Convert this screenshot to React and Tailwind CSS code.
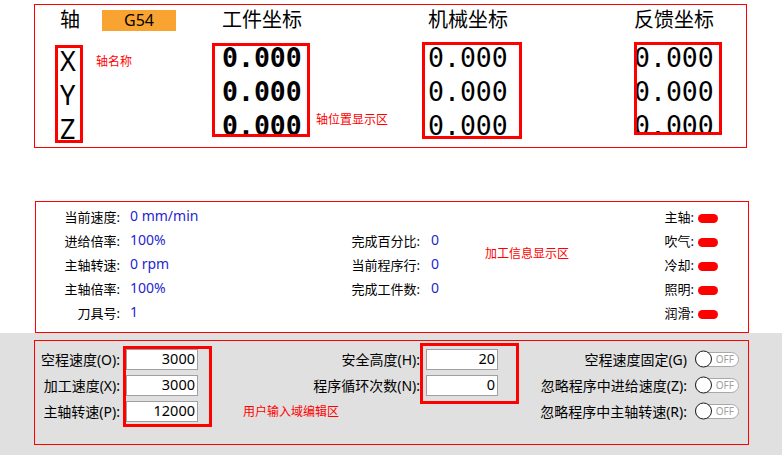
const axes = ['X', 'Y', 'Z'];

const leftInfo = [
  ['当前速度:', '0 mm/min'],
  ['进给倍率:', '100%'],
  ['主轴转速:', '0 rpm'],
  ['主轴倍率:', '100%'],
  ['刀具号:', '1'],
];

const midInfo = [
  ['完成百分比:', '0'],
  ['当前程序行:', '0'],
  ['完成工件数:', '0'],
];

const lamps = ['主轴:', '吹气:', '冷却:', '照明:', '润滑:'];

const leftInputs = [
  ['空程速度(O):', '3000'],
  ['加工速度(X):', '3000'],
  ['主轴转速(P):', '12000'],
];

const midInputs = [
  ['安全高度(H):', '20'],
  ['程序循环次数(N):', '0'],
];

const switches = ['空程速度固定(G)', '忽略程序中进给速度(Z):', '忽略程序中主轴转速(R):'];

function Toggle() {
  return (
    <div className="relative w-[44px] h-[15px] rounded-full border border-[#a8a8a8] bg-white">
      <div className="absolute -left-[1px] top-1/2 -translate-y-1/2 w-[17px] h-[17px] rounded-full border border-[#1a1a1a] bg-white" />
      <span className="absolute right-[4px] top-1/2 -translate-y-1/2 text-[10px] leading-none text-[#a0a0a0]">OFF</span>
    </div>
  );
}

function CoordColumn({ bold, last }) {
  return (
    <div className={`${last ? 'flex-1' : 'w-[206px]'} shrink-0 flex flex-col`}>
      {axes.map((a) => (
        <div
          key={a}
          className={`h-[34px] leading-[34px] text-[26.5px] font-['DejaVu_Sans_Mono',monospace] ${bold ? 'font-bold' : 'font-normal'}`}
        >
          0.000
        </div>
      ))}
    </div>
  );
}

export default function App() {
  return (
    <div className="w-[782px] h-[455px] bg-white text-black overflow-hidden font-['Noto_Sans','Noto_Sans_CJK_SC',sans-serif]">
      <div className="h-[333px] pt-[4px]">
        {/* axis position area */}
        <div className="relative ml-[34px] w-[713px] h-[144px] border border-[#ff0000] pl-[25px]">
          <div className="flex h-[30px] items-center text-[20px]">
            <div className="w-[42px] shrink-0">轴</div>
            <div className="w-[120px] shrink-0">
              <div className="w-[74px] h-[21px] bg-[#f9a431] flex items-center justify-center text-[16px]">G54</div>
            </div>
            <div className="w-[206px] shrink-0">工件坐标</div>
            <div className="w-[206px] shrink-0">机械坐标</div>
            <div>反馈坐标</div>
          </div>
          <div className="flex mt-[6px]">
            <div className="w-[42px] shrink-0 flex flex-col">
              {axes.map((a) => (
                <div key={a} className="h-[34px] leading-[34px] text-[27px] pt-[3px]">{a}</div>
              ))}
            </div>
            <div className="w-[120px] shrink-0" />
            <CoordColumn bold />
            <CoordColumn />
            <CoordColumn last />
          </div>

          <div className="absolute left-[20px] top-[40px] w-[28px] h-[98px] border-[3px] border-[#ff0000]" />
          <div className="absolute left-[61px] top-[50px] text-[12px] leading-[14px] text-[#ff0000]">轴名称</div>
          <div className="absolute left-[177px] top-[38px] w-[98px] h-[94px] border-[3px] border-[#ff0000]" />
          <div className="absolute left-[281px] top-[108px] text-[12px] leading-[14px] text-[#ff0000]">轴位置显示区</div>
          <div className="absolute left-[387px] top-[37px] w-[100px] h-[97px] border-[3px] border-[#ff0000]" />
          <div className="absolute left-[599px] top-[37px] w-[88px] h-[93px] border-[3px] border-[#ff0000]" />
        </div>

        {/* machining info area */}
        <div className="relative ml-[35px] mt-[53px] w-[714px] h-[132px] border border-[#ff0000] pt-[4px] flex text-[13px]">
          <div className="w-[300px] shrink-0 flex flex-col">
            {leftInfo.map(([label, value]) => (
              <div key={label} className="h-[24px] flex items-center">
                <span className="w-[84px] text-right">{label}</span>
                <span className="ml-[10px] pb-[6px] text-[14px] text-[#1f1fd0]">{value}</span>
              </div>
            ))}
          </div>
          <div className="flex flex-col pt-[24px]">
            {midInfo.map(([label, value]) => (
              <div key={label} className="h-[24px] flex items-center">
                <span className="w-[84px] text-right">{label}</span>
                <span className="ml-[11px] pb-[6px] text-[14px] text-[#1f1fd0]">{value}</span>
              </div>
            ))}
          </div>
          <div className="ml-auto pr-[30px] flex flex-col">
            {lamps.map((l) => (
              <div key={l} className="h-[24px] flex items-center justify-end">
                <span>{l}</span>
                <span className="ml-[4px] w-[20px] h-[9px] rounded-full bg-[#ff0000]" />
              </div>
            ))}
          </div>
          <div className="absolute left-[449px] top-[45px] text-[12px] leading-[14px] text-[#ff0000]">加工信息显示区</div>
        </div>
      </div>

      {/* user input area */}
      <div className="h-[122px] bg-[#e0e0e0] pt-[7px]">
        <div className="relative ml-[34px] w-[715px] h-[105px] border border-[#ff0000] pt-[5px] flex text-[14px]">
          <div className="flex flex-col shrink-0">
            {leftInputs.map(([label, value]) => (
              <div key={label} className="h-[26px] flex items-center">
                <span className="w-[85px] text-right">{label}</span>
                <input
                  readOnly
                  value={value}
                  className="ml-[6px] w-[72px] h-[21px] border border-[#a0a0a0] bg-white text-right pr-[2px] text-[14.5px] outline-none"
                />
              </div>
            ))}
          </div>
          <div className="ml-[102px] flex flex-col shrink-0">
            {midInputs.map(([label, value]) => (
              <div key={label} className="h-[26px] flex items-center">
                <span className="w-[120px] text-right">{label}</span>
                <input
                  readOnly
                  value={value}
                  className="ml-[6px] w-[72px] h-[21px] border border-[#a0a0a0] bg-white text-right pr-[2px] text-[14.5px] outline-none"
                />
              </div>
            ))}
          </div>
          <div className="ml-[22px] flex flex-col shrink-0">
            {switches.map((s) => (
              <div key={s} className="h-[26px] flex items-center">
                <span className="w-[167px] text-right whitespace-nowrap">{s}</span>
                <div className="ml-[8px]">
                  <Toggle />
                </div>
              </div>
            ))}
          </div>

          <div className="absolute left-[88px] top-[5px] w-[89px] h-[81px] border-[3px] border-[#ff0000]" />
          <div className="absolute left-[385px] top-[2px] w-[99px] h-[61px] border-[3px] border-[#ff0000]" />
          <div className="absolute left-[208px] top-[64px] text-[12px] leading-[14px] text-[#ff0000]">用户输入域编辑区</div>
        </div>
      </div>
    </div>
  );
}
